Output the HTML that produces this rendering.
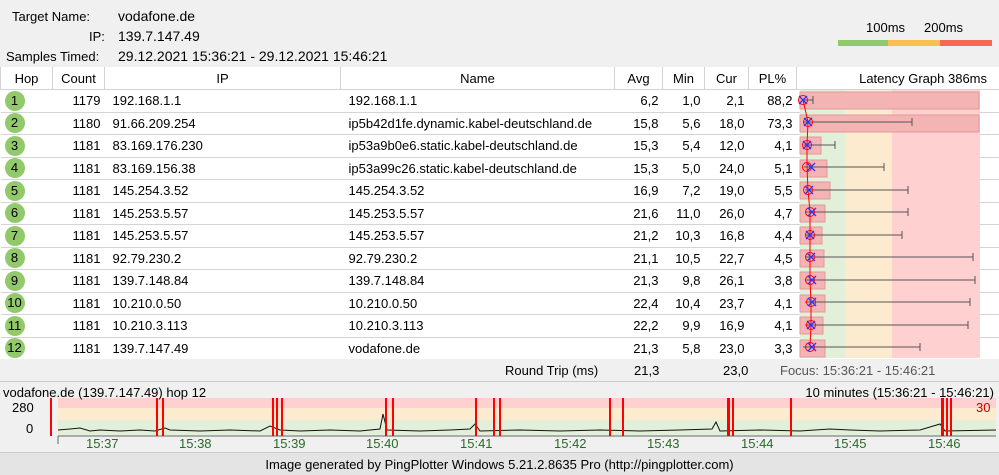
<html><head><style>
body{margin:0;width:999px;height:475px;background:#f0f0f0;font-family:"Liberation Sans",sans-serif;font-size:13px;color:#000;position:relative;overflow:hidden}
.a{position:absolute;white-space:nowrap}
table{position:absolute;left:0;top:67px;width:999px;border-collapse:collapse;background:#fff;table-layout:fixed}
tr{height:22.5px}
td{border-bottom:1px solid #d4d4d4;padding:0 4px;text-align:right;font-size:13px;white-space:nowrap;overflow:hidden}
td.l{text-align:left;padding-left:8px}
th{font-weight:normal;font-size:13px;height:22px;border:1px solid #d4d4d4;border-top:none;background:#fff;padding:0}
.c{display:inline-block;width:20px;height:20px;border-radius:50%;background:#92c96b;text-align:center;line-height:20px;float:left;margin-left:0}
</style></head><body>
<div class="a" style="left:12px;top:9px">Target Name:</div><div class="a" style="left:118px;top:8px;font-size:14px">vodafone.de</div>
<div class="a" style="left:89px;top:29px">IP:</div><div class="a" style="left:118px;top:28px;font-size:14px">139.7.147.49</div>
<div class="a" style="left:6px;top:49px">Samples Timed:</div><div class="a" style="left:118px;top:48px;font-size:14px">29.12.2021 15:36:21 - 29.12.2021 15:46:21</div>
<div class="a" style="left:866px;top:20px">100ms</div><div class="a" style="left:924px;top:20px">200ms</div>
<div class="a" style="left:838px;top:40px;width:50px;height:6px;background:#92c96b"></div>
<div class="a" style="left:888px;top:40px;width:52px;height:6px;background:#fbc04f"></div>
<div class="a" style="left:940px;top:40px;width:52px;height:6px;background:#f5694f"></div>
<table>
<colgroup><col style="width:52px"><col style="width:52px"><col style="width:236px"><col style="width:274px"><col style="width:48px"><col style="width:42px"><col style="width:44px"><col style="width:48px"><col style="width:203px"></colgroup>
<tr><th>Hop</th><th>Count</th><th>IP</th><th>Name</th><th>Avg</th><th>Min</th><th>Cur</th><th>PL%</th><th style="text-align:right;padding-right:12px">Latency Graph 386ms</th></tr>
<tr><td><span class="c">1</span></td><td>1179</td><td class="l">192.168.1.1</td><td class="l">192.168.1.1</td><td>6,2</td><td>1,0</td><td>2,1</td><td>88,2</td><td></td></tr>
<tr><td><span class="c">2</span></td><td>1180</td><td class="l">91.66.209.254</td><td class="l">ip5b42d1fe.dynamic.kabel-deutschland.de</td><td>15,8</td><td>5,6</td><td>18,0</td><td>73,3</td><td></td></tr>
<tr><td><span class="c">3</span></td><td>1181</td><td class="l">83.169.176.230</td><td class="l">ip53a9b0e6.static.kabel-deutschland.de</td><td>15,3</td><td>5,4</td><td>12,0</td><td>4,1</td><td></td></tr>
<tr><td><span class="c">4</span></td><td>1181</td><td class="l">83.169.156.38</td><td class="l">ip53a99c26.static.kabel-deutschland.de</td><td>15,3</td><td>5,0</td><td>24,0</td><td>5,1</td><td></td></tr>
<tr><td><span class="c">5</span></td><td>1181</td><td class="l">145.254.3.52</td><td class="l">145.254.3.52</td><td>16,9</td><td>7,2</td><td>19,0</td><td>5,5</td><td></td></tr>
<tr><td><span class="c">6</span></td><td>1181</td><td class="l">145.253.5.57</td><td class="l">145.253.5.57</td><td>21,6</td><td>11,0</td><td>26,0</td><td>4,7</td><td></td></tr>
<tr><td><span class="c">7</span></td><td>1181</td><td class="l">145.253.5.57</td><td class="l">145.253.5.57</td><td>21,2</td><td>10,3</td><td>16,8</td><td>4,4</td><td></td></tr>
<tr><td><span class="c">8</span></td><td>1181</td><td class="l">92.79.230.2</td><td class="l">92.79.230.2</td><td>21,1</td><td>10,5</td><td>22,7</td><td>4,5</td><td></td></tr>
<tr><td><span class="c">9</span></td><td>1181</td><td class="l">139.7.148.84</td><td class="l">139.7.148.84</td><td>21,3</td><td>9,8</td><td>26,1</td><td>3,8</td><td></td></tr>
<tr><td><span class="c">10</span></td><td>1181</td><td class="l">10.210.0.50</td><td class="l">10.210.0.50</td><td>22,4</td><td>10,4</td><td>23,7</td><td>4,1</td><td></td></tr>
<tr><td><span class="c">11</span></td><td>1181</td><td class="l">10.210.3.113</td><td class="l">10.210.3.113</td><td>22,2</td><td>9,9</td><td>16,9</td><td>4,1</td><td></td></tr>
<tr><td><span class="c">12</span></td><td>1181</td><td class="l">139.7.147.49</td><td class="l">vodafone.de</td><td>21,3</td><td>5,8</td><td>23,0</td><td>3,3</td><td></td></tr>
</table>
<svg class="a" style="left:0;top:0" width="999" height="475">
<rect x="800" y="90" width="45" height="268" fill="#e2f0d9"/><rect x="845" y="90" width="47" height="268" fill="#fdebd0"/><rect x="892" y="90" width="88" height="268" fill="#ffd0d0"/>
<g fill="#f4b4b4" stroke="#e09a9a">
<rect x="800" y="92" width="179" height="17"/><rect x="800" y="115" width="179" height="17"/>
<rect x="800" y="137" width="21" height="17"/><rect x="800" y="160" width="27" height="17"/><rect x="800" y="182" width="30" height="17"/>
<rect x="800" y="205" width="25" height="17"/><rect x="800" y="227" width="22" height="17"/><rect x="800" y="250" width="24" height="17"/>
<rect x="800" y="272" width="25" height="17"/><rect x="800" y="295" width="25" height="17"/><rect x="800" y="317" width="23" height="17"/><rect x="800" y="340" width="25" height="17"/>
</g>
<g stroke="#555" stroke-width="1">
<path d="M803 100H813M813 96V104M803 122H912M912 118V126M804 145H835M835 141V149M804 167H884M884 163V171M805 190H908M908 186V194M805 212H908M908 208V216M805 235H902M902 231V239M805 257H973M973 253V261M805 280H975M975 276V284M805 302H970M970 298V306M805 325H968M968 321V329M803 347H920M920 343V351"/>
</g>
<polyline fill="none" stroke="#f00" points="803,100 808,122 807,145 807,167 808,190 810,212 810,235 810,257 810,280 811,302 811,325 810,347"/>
<g fill="none" stroke="#f00"><circle cx="803" cy="100" r="4.5"/><circle cx="808" cy="122" r="4.5"/><circle cx="807" cy="145" r="4.5"/><circle cx="807" cy="167" r="4.5"/><circle cx="808" cy="190" r="4.5"/><circle cx="810" cy="212" r="4.5"/><circle cx="810" cy="235" r="4.5"/><circle cx="810" cy="257" r="4.5"/><circle cx="810" cy="280" r="4.5"/><circle cx="811" cy="302" r="4.5"/><circle cx="811" cy="325" r="4.5"/><circle cx="810" cy="347" r="4.5"/></g>
<g stroke="#33f" stroke-width="1.3"><path d="M799 96l8 8M807 96l-8 8M804 118l8 8M812 118l-8 8M803 141l8 8M811 141l-8 8M807 163l8 8M815 163l-8 8M805 186l8 8M813 186l-8 8M808 208l8 8M816 208l-8 8M806 231l8 8M814 231l-8 8M807 253l8 8M815 253l-8 8M808 276l8 8M816 276l-8 8M808 298l8 8M816 298l-8 8M807 321l8 8M815 321l-8 8M808 343l8 8M816 343l-8 8"/></g>
<rect x="58" y="398" width="938" height="10" fill="#ffd0d0"/><rect x="58" y="408" width="938" height="12" fill="#fdebd0"/><rect x="58" y="420" width="938" height="15" fill="#e2f0d9"/>
<polyline fill="none" stroke="#111" points="58,430 70,429 80,428 90,431 100,430 120,431 140,430 155,431 165,428 170,430 200,431 230,430 260,431 270,426 280,430 300,431 330,430 360,431 380,429 383,414 387,430 420,431 450,430 470,429 475,424 480,431 520,430 560,431 600,430 640,431 680,430 712,429 716,422 720,431 760,430 800,431 830,429 850,430 880,431 920,430 940,424 945,431 996,430"/>
<path d="M58 436H996M58 436V444" stroke="#666"/>
<g fill="#f00"><rect x="50" y="398" width="2" height="38"/><rect x="156" y="398" width="2" height="38"/><rect x="162" y="398" width="2" height="38"/><rect x="272" y="398" width="2" height="38"/><rect x="276" y="398" width="2" height="38"/><rect x="281" y="398" width="2" height="38"/><rect x="385" y="398" width="2" height="38"/><rect x="392" y="398" width="2" height="38"/><rect x="475" y="398" width="2" height="38"/><rect x="493" y="398" width="2" height="38"/><rect x="499" y="398" width="2" height="38"/><rect x="609" y="398" width="2" height="38"/><rect x="622" y="398" width="2" height="38"/><rect x="727" y="398" width="3" height="38"/><rect x="732" y="398" width="2" height="38"/><rect x="790" y="398" width="2" height="38"/><rect x="941" y="398" width="3" height="38"/><rect x="946" y="398" width="2" height="38"/><rect x="950" y="398" width="2" height="38"/></g>
</svg>
<div class="a" style="left:0;top:359px;width:999px;height:22px;background:#f0f0f0"></div>
<div class="a" style="left:505px;top:363px">Round Trip (ms)</div><div class="a" style="left:634px;top:363px">21,3</div><div class="a" style="left:723px;top:363px">23,0</div>
<div class="a" style="left:780px;top:363px;color:#555">Focus: 15:36:21 - 15:46:21</div>
<div class="a" style="left:0;top:381px;width:999px;height:1px;background:#ccc"></div>
<div class="a" style="left:3px;top:385px">vodafone.de (139.7.147.49) hop 12</div>
<div class="a" style="right:5px;top:385px">10 minutes (15:36:21 - 15:46:21)</div>
<div class="a" style="left:12px;top:400px">280</div><div class="a" style="left:26px;top:421px">0</div>
<div class="a" style="left:976px;top:400px;color:#c00">30</div>
<div class="a" style="left:0;top:436px;width:999px;color:#2a6a2a;font-size:13px">
<span class="a" style="left:86px">15:37</span><span class="a" style="left:179px">15:38</span><span class="a" style="left:273px">15:39</span><span class="a" style="left:366px">15:40</span><span class="a" style="left:460px">15:41</span><span class="a" style="left:554px">15:42</span><span class="a" style="left:647px">15:43</span><span class="a" style="left:741px">15:44</span><span class="a" style="left:834px">15:45</span><span class="a" style="left:928px">15:46</span></div>
<div class="a" style="left:0;top:452px;width:999px;height:1px;background:#ccc"></div>
<div class="a" style="left:0;top:453px;width:999px;height:22px;background:#e4e4e4"></div>
<div class="a" style="left:0;top:457px;width:999px;text-align:center">Image generated by PingPlotter Windows 5.21.2.8635 Pro (http://pingplotter.com)</div>
</body></html>
